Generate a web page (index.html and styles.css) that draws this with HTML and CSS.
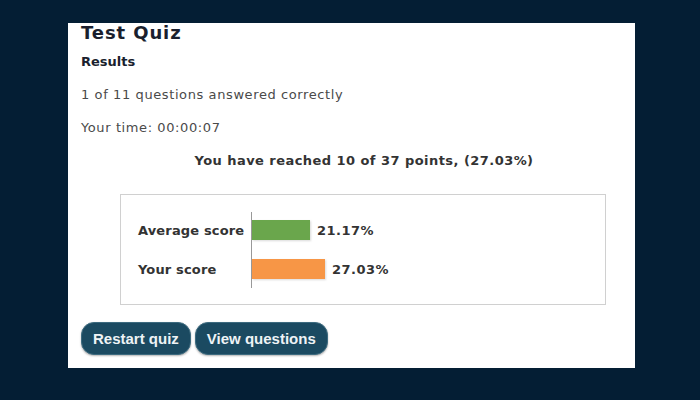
FILE: index.html
```html
<!DOCTYPE html>
<html>
<head>
<meta charset="utf-8">
<link rel="stylesheet" href="styles.css">
</head>
<body>
<div class="panel">
  <h1 class="title">Test Quiz</h1>
  <h2 class="subtitle">Results</h2>
  <p class="line">1 of 11 questions answered correctly</p>
  <p class="line">Your time: 00:00:07</p>
  <p class="points">You have reached 10 of 37 points, (27.03%)</p>
  <div class="chart">
    <div class="labels">
      <div class="label">Average score</div>
      <div class="label">Your score</div>
    </div>
    <div class="bars">
      <div class="row"><div class="bar green" style="width:58px"></div><span class="val">21.17%</span></div>
      <div class="row"><div class="bar orange" style="width:73px"></div><span class="val">27.03%</span></div>
    </div>
  </div>
  <div class="buttons">
    <button class="btn">Restart quiz</button>
    <button class="btn">View questions</button>
  </div>
</div>
</body>
</html>
```
FILE: styles.css
```css
html, body {
  margin: 0;
  padding: 0;
  background: #041e34;
  width: 700px;
  height: 400px;
  overflow: hidden;
}
.panel {
  position: relative;
  margin: 23px 0 0 68px;
  width: 567px;
  height: 345px;
  background: #ffffff;
  box-sizing: border-box;
  padding: 0 0 0 13px;
  font-family: "DejaVu Sans", Verdana, sans-serif;
  color: #444;
}
.title {
  margin: 0;
  font-size: 18px;
  font-weight: bold;
  color: #1a1f2e;
  line-height: 20px;
  letter-spacing: 0.9px;
}
.subtitle {
  margin: 10px 0 0 0;
  font-size: 13px;
  font-weight: bold;
  color: #1a1f2e;
  line-height: 18px;
}
.line {
  margin: 15px 0 0 0;
  font-size: 13px;
  line-height: 18px;
  color: #4a4a4a;
  letter-spacing: 0.6px;
}
.points {
  margin: 15px 0 0 0;
  font-size: 13px;
  line-height: 18px;
  font-weight: bold;
  color: #333;
  text-align: center;
  padding-left: 12px;
  letter-spacing: 0.45px;
}
.chart {
  margin: 24px 0 0 39px;
  width: 486px;
  height: 111px;
  box-sizing: border-box;
  border: 1px solid #d0d0d0;
  display: flex;
  padding: 17px 0 0 17px;
}
.labels {
  display: flex;
  flex-direction: column;
  gap: 19px;
  padding-top: 9px;
  width: 113px;
}
.label {
  font-size: 13px;
  font-weight: bold;
  color: #333;
  line-height: 20px;
  letter-spacing: 0.15px;
}
.bars {
  border-left: 1px solid #999;
  height: 76px;
  display: flex;
  flex-direction: column;
  gap: 19px;
  padding-top: 8px;
  box-sizing: border-box;
}
.row {
  display: flex;
  align-items: center;
  gap: 7px;
  height: 20px;
}
.bar {
  height: 20px;
  box-shadow: 1px 1px 2px rgba(0,0,0,0.15);
}
.green { background: #6aa64c; }
.orange { background: #f79646; }
.val {
  font-size: 13px;
  font-weight: bold;
  color: #333;
  letter-spacing: 0.5px;
}
.buttons {
  display: flex;
  gap: 4px;
  margin-top: 17px;
}
.btn {
  font-family: "Liberation Sans", Arial, sans-serif;
  font-weight: bold;
  font-size: 15px;
  color: #eef3f6;
  background: #1b4a61;
  border: 1px solid #3c6a7f;
  border-radius: 13px;
  height: 33px;
  padding: 0 11px;
  box-shadow: 0 1px 2px rgba(0,0,0,0.3);
}
```
